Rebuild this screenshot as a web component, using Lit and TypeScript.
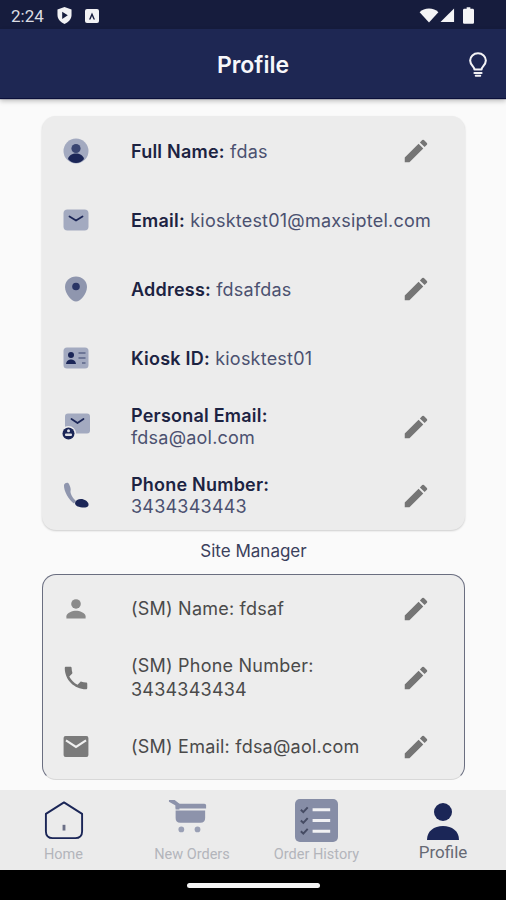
import { LitElement, html, css } from "lit";
import { customElement } from "lit/decorators.js";

const pencil = html`<svg class="ic" viewBox="0 0 24 24" width="30" height="30"><path fill="#757575" d="M3 17.25V21h3.75L17.81 9.94l-3.75-3.75L3 17.25zM20.71 7.04a1 1 0 0 0 0-1.41l-2.34-2.34a1 1 0 0 0-1.41 0l-1.83 1.83 3.75 3.75 1.83-1.83z"/></svg>`;

const soft = "#a3aac0";
const navy = "#1b2657";

const icons: Record<string, unknown> = {
  user: html`<svg viewBox="0 0 26 26" width="26" height="26"><circle cx="13" cy="13" r="12.5" fill="${soft}"/><circle cx="13" cy="10.5" r="4.6" fill="#3a4672"/><path fill="${navy}" d="M5 21c1-4 4.5-5.5 8-5.500s7 1.500 8 5.500c-2 2.500-5 4-8 4s-6-1.500-8-4z"/></svg>`,
  mail: html`<svg viewBox="0 0 26 22" width="26" height="22"><rect x="0.500" y="0.500" width="25" height="21" rx="4" fill="${soft}"/><path d="M6.500 7.500 13 11.500l6.500-4" fill="none" stroke="${navy}" stroke-width="1.800" stroke-linecap="round" stroke-linejoin="round"/></svg>`,
  pin: html`<svg viewBox="0 0 24 26" width="24" height="26"><path fill="#8f96ae" d="M12 .5c6 0 11 4.300 11 10.500 0 6.500-6.500 14.500-11 14.500S1 17.500 1 11C1 4.800 6 .5 12 .5z"/><circle cx="12" cy="10.500" r="3.800" fill="#2a3565"/></svg>`,
  card: html`<svg viewBox="0 0 26 22" width="26" height="22"><rect x="0.500" y="0.500" width="25" height="21" rx="3.500" fill="${soft}"/><circle cx="8" cy="8" r="3" fill="${navy}"/><path fill="${navy}" d="M3 17c.5-3.500 3-4.500 5-4.500s4.500 1 5 4.500z"/><path d="M15.500 6h7M15.500 11h7M19 16h3.500" stroke="#6d7696" stroke-width="1.800"/></svg>`,
  pmail: html`<svg viewBox="0 0 28 28" width="28" height="28"><rect x="3" y="0.500" width="25" height="20" rx="3" fill="${soft}"/><path d="M9.500 6 15.500 10l6-4" fill="none" stroke="${navy}" stroke-width="1.800" stroke-linecap="round" stroke-linejoin="round"/><circle cx="6.500" cy="20.500" r="7.500" fill="#ececec"/><circle cx="6.500" cy="20.500" r="6" fill="${navy}"/><rect x="3" y="20.500" width="7" height="2.500" rx="1" fill="#dfe1e8"/><circle cx="6.500" cy="17.800" r="1.500" fill="#dfe1e8"/></svg>`,
  phone: html`<svg viewBox="0 0 26 28" width="26" height="28"><path fill="#8f96ae" d="M1 3c1-2.500 4-3 5-1 1.500 3 2 5.500 1.500 7-.3 1 .5 3.500 2 6 1 1.700 2.500 3 3.500 4l-2 2.500C6 18 .5 9 1 3z"/><path fill="${navy}" d="M12 21c.5-2.500 3-4 6-4 3.500 0 7 2.500 7.500 5 .3 2-1 3.500-4.500 3.500-5 0-9-1.500-9-4.500z"/></svg>`,
  sperson: html`<svg viewBox="0 0 20 20" width="24" height="24"><circle cx="10" cy="5.800" r="4" fill="#8a8a8a"/><path fill="#8a8a8a" d="M2 16c0-3 5.300-4.600 8-4.600s8 1.600 8 4.600v2H2z"/></svg>`,
  sphone: html`<svg viewBox="0 0 24 24" width="30" height="30"><path fill="#757575" d="M6.620 10.790c1.440 2.830 3.760 5.140 6.590 6.590l2.200-2.200c.27-.27.67-.36 1.020-.24 1.120.37 2.330.57 3.570.57.550 0 1 .45 1 1V20c0 .55-.45 1-1 1C10.610 21 3 13.390 3 4c0-.55.45-1 1-1h3.500c.55 0 1 .45 1 1 0 1.250.2 2.450.57 3.570.11.350.03.740-.25 1.020l-2.200 2.200z"/></svg>`,
  smail: html`<svg viewBox="0 0 26 22" width="26" height="21"><rect width="26" height="22" rx="2" fill="#7b7b7b"/><path d="M2.500 4.500 13 11.500l10.500-7" fill="none" stroke="#f1f1f1" stroke-width="2.200"/></svg>`,
};

@customElement("app-root")
export class AppRoot extends LitElement {
  static styles = css`
    :host { display: flex; flex-direction: column; width: 506px; height: 900px; overflow: hidden; background: #fafafa; font-family: Inter, "Noto Sans", sans-serif; color: #2c3350; }
    .status { height: 29px; box-sizing: border-box; flex: none; background: #161c3d; color: #dcdde3; display: flex; align-items: center; padding: 2px 32px 0 11px; font: 400 17px Roboto, sans-serif; }
    .status .l { display: flex; align-items: center; gap: 13px; }
    .status .r { margin-left: auto; display: flex; align-items: center; gap: 1px; }
    .bar { height: 69px; padding-top: 3px; box-sizing: border-box; flex: none; background: #1e2753; display: flex; align-items: center; justify-content: center; position: relative; box-shadow: 0 1px 1px #0a0f3a, 0 3px 5px rgba(0,0,0,.25); z-index: 2; color: #f7f7fa; font-weight: 600; font-size: 23px; }
    .bulb { position: absolute; right: 18px; top: 23px; }
    .main { flex: 1; min-height: 0; padding: 18px 41px 0 42px; overflow: hidden; display: flex; flex-direction: column; }
    .card { background: #ececec; border-radius: 14px; flex: none; box-shadow: 0 1px 2px rgba(0,0,0,.18); }
    .row { height: 69px; display: grid; grid-template-columns: 68px minmax(0, 1fr) 30px; column-gap: 0; padding-right: 34px; align-items: center; }
    .icon { display: flex; justify-content: center; align-items: center; }
    .txt { padding-left: 21px; padding-top: 3px; font-size: 18px; line-height: 22.500px; color: #4b5170; letter-spacing: .22px; white-space: nowrap; }
    .txt.two { padding-top: 1px; }
    .txt b { color: #1c2342; font-weight: 600; }
    .edit { display: flex; align-items: center; justify-content: center; }
    .cap { height: 44px; padding-bottom: 2px; box-sizing: border-box; display: flex; align-items: center; justify-content: center; font-size: 17px; color: #3a405c; flex: none; }
    .sm { background: #ededed; border: 1px solid #6a6e80; border-bottom-color: #d8d8d8; border-radius: 14px; height: 204px; box-shadow: none; overflow: hidden; }
    .sm .row { margin: -1px 0 1px -1px; padding-right: 33px; }
    .sm .txt { color: #4a4a4a; line-height: 24px; padding-top: 0; }
    .nav { height: 80px; flex: none; background: #ebebeb; display: grid; grid-template-columns: 127px 130px 119px 130px; position: relative; }
    .tab { display: flex; flex-direction: column; align-items: center; position: relative; color: #b3b5bb; font: 400 14.500px Roboto, sans-serif; }
    .tab svg { position: absolute; top: 8px; }
    .tab span { position: absolute; top: 56px; white-space: nowrap; }
    .tab.on { color: #666974; font-size: 17px; padding-left: 4px; }
    .tab.on span { top: 52px; }
    .gest { height: 30px; flex: none; background: #000; display: flex; align-items: center; justify-content: center; }
    .gest i { display: block; width: 133px; height: 5px; border-radius: 3px; background: #f4f4f4; }
  `;

  row(ic: string, label: string, val: string, edit = true, two = false) {
    return html`<div class="row">
      <div class="icon">${icons[ic]}</div>
      <div class="txt ${two ? "two" : ""}"><b>${label}</b>${two ? html`<br />` : " "}${val}</div>
      <div class="edit">${edit ? pencil : ""}</div>
    </div>`;
  }
  sm(ic: string, t: unknown) {
    return html`<div class="row">
      <div class="icon">${icons[ic]}</div>
      <div class="txt">${t}</div>
      <div class="edit">${pencil}</div>
    </div>`;
  }

  render() {
    return html`
      <div class="status">
        <div class="l">
          <span>2:24</span>
          <svg viewBox="0 0 16 18" width="15" height="17"><path fill="#f2f2f4" d="M8 0l7.500 2.500v6c0 4.500-3.500 8-7.500 9.500C4 16.500.5 13 .5 8.500v-6z"/><path fill="#161c3d" d="M5.500 5l6 3.800-6 3.800z"/></svg>
          <svg viewBox="0 0 14 14" width="14" height="14"><rect width="14" height="14" rx="2" fill="#f2f2f4"/><path d="M7 3.500 4 10.500h1.500L7 7l1.500 3.500H10z" fill="#161c3d"/></svg>
        </div>
        <div class="r">
          <svg viewBox="0 0 20 16" width="20" height="15"><path fill="#f4f4f6" d="M0 4.500C2.500 1.800 6 .5 10 .5s7.500 1.300 10 4L10 15.500z"/></svg>
          <svg viewBox="0 0 16 16" width="15" height="15"><path fill="#f4f4f6" d="M15 .5V15H.5z"/></svg>
          <svg viewBox="0 0 12 18" width="11" height="17" style="margin-left:7px"><path fill="#f4f4f6" d="M4 0h4v1.500h2.500c.8 0 1.500.7 1.500 1.500v13.500c0 .8-.7 1.500-1.500 1.500h-9C.7 18 0 17.300 0 16.500V3c0-.8.7-1.500 1.500-1.500H4z"/></svg>
        </div>
      </div>
      <div class="bar">
        Profile
        <svg class="bulb" viewBox="0 0 22 28" width="20" height="25" fill="none" stroke="#f3f3f6" stroke-width="2.300"><path d="M7 19.500c0-3-4.800-5-4.800-10C2.200 5 6 1.500 11 1.500s8.800 3.500 8.800 8c0 5-4.800 7-4.800 10z" stroke-linejoin="round"/><path d="M7 23.500h8M8.500 26.500h5" stroke-linecap="round"/></svg>
      </div>
      <div class="main">
        <div class="card">
          ${this.row("user", "Full Name:", "fdas")}
          ${this.row("mail", "Email:", "kiosktest01@maxsiptel.com", false)}
          ${this.row("pin", "Address:", "fdsafdas")}
          ${this.row("card", "Kiosk ID:", "kiosktest01", false)}
          ${this.row("pmail", "Personal Email:", "fdsa@aol.com", true, true)}
          ${this.row("phone", "Phone Number:", "3434343443", true, true)}
        </div>
        <div class="cap">Site Manager</div>
        <div class="card sm">
          ${this.sm("sperson", "(SM) Name: fdsaf")}
          ${this.sm("sphone", html`(SM) Phone Number:<br />3434343434`)}
          ${this.sm("smail", "(SM) Email: fdsa@aol.com")}
        </div>
      </div>
      <div class="nav">
        <div class="tab">
          <svg viewBox="0 0 42 42" width="40" height="40" style="top:11px"><path d="M21 1.500 40 13.500V32c0 4-2.500 7-7 7H9c-4.500 0-7-3-7-7V13.500z" fill="none" stroke="#1b2657" stroke-width="2" stroke-linejoin="round"/><rect x="19.500" y="25" width="3" height="6" fill="#6b6f86"/></svg>
          <span>Home</span>
        </div>
        <div class="tab">
          <svg viewBox="0 0 42 42" width="40" height="40" style="margin-left:-8px"><path d="M1 2h6l5 4v6H8V8L1 4z" fill="#8d93ab"/><path d="M8 6h30c1.500 0 2 1 2 2v3H8z" fill="#8d93ab"/><path d="M8 13h31v8c0 3-1.500 5-5 5H13c-3.500 0-5-2-5-5z" fill="#8d93ab"/><circle cx="14" cy="33" r="3" fill="#9aa0b5"/><circle cx="31" cy="33" r="3" fill="#9aa0b5"/></svg>
          <span>New Orders</span>
        </div>
        <div class="tab">
          <svg viewBox="0 0 44 44" width="43" height="43" style="top:9px"><rect width="44" height="44" rx="5" fill="#868da6"/><path d="M18 11h18M18 22h18M18 33h18" stroke="#f2f2f4" stroke-width="3"/><path d="M6 11l2.500 2.500L13 8.500M6 22l2.500 2.500L13 19.500M6 33l2.500 2.500L13 30.500" fill="none" stroke="#454b63" stroke-width="2"/></svg>
          <span>Order History</span>
        </div>
        <div class="tab on">
          <svg viewBox="0 0 34 38" width="34" height="38" style="top:13px"><circle cx="17" cy="9" r="9" fill="#1b2657"/><path fill="#1b2657" d="M1 37c0-9 7-14 16-14s16 5 16 14z"/></svg>
          <span>Profile</span>
        </div>
      </div>
      <div class="gest"><i></i></div>
    `;
  }
}
